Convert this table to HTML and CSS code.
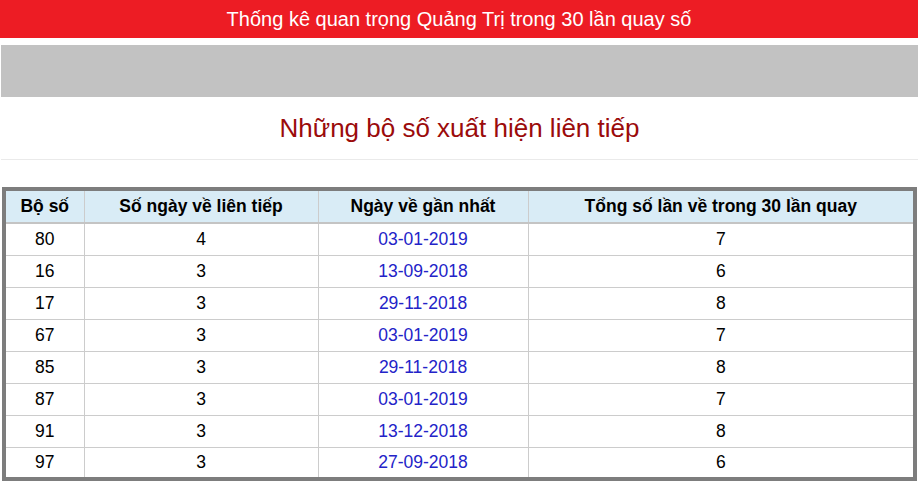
FILE: index.html
```html
<!DOCTYPE html>
<html lang="vi">
<head>
<meta charset="utf-8">
<title>Thống kê</title>
<link rel="stylesheet" href="styles.css">
</head>
<body>
<div class="page">
  <div class="topbar">Thống kê quan trọng Quảng Trị trong 30 lần quay số</div>
  <div class="ad"></div>
  <h2 class="heading">Những bộ số xuất hiện liên tiếp</h2>
  <div class="table-wrap">
    <table class="stats">
      <thead>
        <tr><th class="c1">Bộ số</th><th class="c2">Số ngày về liên tiếp</th><th class="c3">Ngày về gần nhất</th><th class="c4">Tổng số lần về trong 30 lần quay</th></tr>
      </thead>
      <tbody>
        <tr><td>80</td><td>4</td><td class="date">03-01-2019</td><td>7</td></tr>
        <tr><td>16</td><td>3</td><td class="date">13-09-2018</td><td>6</td></tr>
        <tr><td>17</td><td>3</td><td class="date">29-11-2018</td><td>8</td></tr>
        <tr><td>67</td><td>3</td><td class="date">03-01-2019</td><td>7</td></tr>
        <tr><td>85</td><td>3</td><td class="date">29-11-2018</td><td>8</td></tr>
        <tr><td>87</td><td>3</td><td class="date">03-01-2019</td><td>7</td></tr>
        <tr><td>91</td><td>3</td><td class="date">13-12-2018</td><td>8</td></tr>
        <tr><td>97</td><td>3</td><td class="date">27-09-2018</td><td>6</td></tr>
      </tbody>
    </table>
  </div>
</div>
</body>
</html>
```
FILE: styles.css
```css
* { box-sizing: border-box; }
html, body { margin: 0; padding: 0; background: #fff; }
body { font-family: "Liberation Sans", Arial, sans-serif; color: #000; }
.page { width: 919px; }
.topbar {
  height: 38px;
  width: 918px;
  background: #ed1c24;
  color: #fff;
  font-size: 20px;
  line-height: 38px;
  text-align: center;
}
.ad {
  margin: 7px 1px 0 1px;
  width: 917px;
  height: 52px;
  background: #c2c2c2;
}
.heading {
  margin: 0 1px;
  width: 917px;
  height: 63px;
  border-bottom: 1px solid #eaeaea;
  color: #9b0b0b;
  font-weight: normal;
  font-size: 26px;
  line-height: 62px;
  text-align: center;
}
.table-wrap { padding: 27px 2px 0 2px; }
.stats {
  width: 915px;
  border-collapse: collapse;
  border: 4px solid #7d7d7d;
  font-size: 17.5px;
}
.stats th, .stats td {
  border: 1px solid #cccccc;
  text-align: center;
  padding: 0;
}
.stats th {
  background: #d9ecf6;
  font-weight: bold;
  height: 34px;
  border-top: none;
  border-bottom: 2px solid #c4c4c4;
}
.stats td { height: 32px; }
.stats tr:last-child td { border-bottom: none; }
.stats th:first-child, .stats td:first-child { border-left: none; }
.stats th:last-child, .stats td:last-child { border-right: none; }
.c1 { width: 80px; }
.c2 { width: 234px; }
.c3 { width: 210px; }
.c4 { width: auto; }
.date { color: #2323c8; }
```
